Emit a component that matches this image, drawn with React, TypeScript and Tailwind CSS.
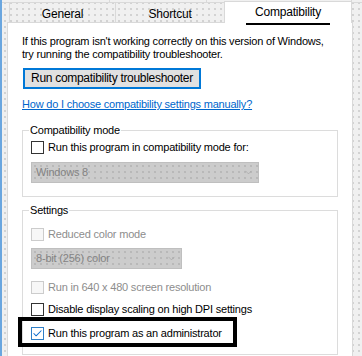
import { Check, ChevronDown } from 'lucide-react';

const dots = 'bg-[#f0f0f0] bg-[radial-gradient(circle,#d2d2d2_0.7px,transparent_0.9px)] bg-size-[6px_6px]';

function Checkbox({ label, checked = false, disabled = false }: { label: string; checked?: boolean; disabled?: boolean }) {
  const box = disabled
    ? 'border-[#cccccc] bg-[#f7f7f7]'
    : checked
      ? 'border-[#2f7fc7] bg-white'
      : 'border-[#333333] bg-white';
  return (
    <div className="flex items-center h-[13px] gap-[4px]">
      <span className={`w-[13px] h-[13px] border flex items-center justify-center shrink-0 ${box}`}>
        {checked && <Check className="w-[11px] h-[11px] text-[#0a6cd0]" strokeWidth={2.2} />}
      </span>
      <span className={`leading-[13px] whitespace-nowrap ${disabled ? 'text-[#8d8d8d]' : 'text-black'}`}>{label}</span>
    </div>
  );
}

function DisabledSelect({ value, width }: { value: string; width: string }) {
  return (
    <div className={`${width} h-[21px] border border-[#bfbfbf] bg-[#cccccc] bg-[radial-gradient(circle,#b8b8b8_0.7px,transparent_0.9px)] bg-size-[6px_6px] flex items-center justify-between pl-[4px] pr-[4px]`}>
      <span className="text-[#838383] leading-[13px]">{value}</span>
      <ChevronDown className="w-[11px] h-[11px] text-[#a3a3a3]" strokeWidth={1.4} />
    </div>
  );
}

export default function App() {
  return (
    <div
      className={`relative w-[362px] h-[356px] overflow-hidden border-l-2 border-[#6aa6df] ${dots} text-[11px] tracking-[-0.2px] text-black`}
      style={{ fontFamily: '"Liberation Sans", Arial, sans-serif' }}
    >
      {/* Upper tab row (cut off) */}
      <div className="flex h-[3px] pl-[7px] border-b border-[#d9d9d9]">
        <div className="w-[101px] border-r border-[#d9d9d9]" />
        <div className="w-[97px] border-r border-[#d9d9d9]" />
        <div className="w-[145px] border-r border-[#d9d9d9]" />
      </div>

      {/* Tabs */}
      <div className="flex h-[19px] pl-[7px] items-end text-[12px]">
        <div className="w-[106px] h-[19px] border-l border-[#d9d9d9] flex items-center justify-center pt-[2px]">General</div>
        <div className="w-[109px] h-[19px] border-l border-[#d9d9d9] flex items-center justify-center pt-[2px]">Shortcut</div>
        <div className="relative z-10 w-[128px] h-[22px] -mb-[1px] bg-white border-l border-r border-t border-[#d9d9d9] flex items-center justify-center pb-[1px]">
          Compatibility
        </div>
      </div>

      {/* Panel */}
      <div className="ml-[5px] w-[346px] h-[340px] bg-white border border-[#d9d9d9] pl-[14px] pt-[12px]">
        <p className="leading-[13px]">
          If this program isn't working correctly on this version of Windows,
          <br />
          try running the compatibility troubleshooter.
        </p>

        <button className="mt-[7px] ml-[1px] w-[178px] h-[21px] border-2 border-[#0078d7] bg-[#e1e1e1] flex items-center justify-center leading-[13px] text-[12px] tracking-[-0.3px]">
          Run compatibility troubleshooter
        </button>

        <a className="block mt-[9px] leading-[13px] text-[#0066cc] underline underline-offset-[1px] w-max">
          How do I choose compatibility settings manually?
        </a>

        <fieldset className="mt-[13px] w-[316px] border border-[#dcdcdc] pl-[8px] pb-[13px]">
          <legend className="-ml-[2px] px-[1px] leading-[13px]">Compatibility mode</legend>
          <div className="mt-[4px]">
            <Checkbox label="Run this program in compatibility mode for:" />
          </div>
          <div className="mt-[8px]">
            <DisabledSelect value="Windows 8" width="w-[228px]" />
          </div>
        </fieldset>

        <fieldset className="mt-[7px] w-[316px] border border-[#dcdcdc] pl-[8px] pb-[14px]">
          <legend className="-ml-[2px] px-[1px] leading-[13px]">Settings</legend>
          <div className="mt-[11px]">
            <Checkbox label="Reduced color mode" disabled />
          </div>
          <div className="mt-[7px]">
            <DisabledSelect value="8-bit (256) color" width="w-[151px]" />
          </div>
          <div className="mt-[12px]">
            <Checkbox label="Run in 640 x 480 screen resolution" disabled />
          </div>
          <div className="mt-[9px]">
            <Checkbox label="Disable display scaling on high DPI settings" />
          </div>
          <div className="mt-[11px]">
            <Checkbox label="Run this program as an administrator" checked />
          </div>
        </fieldset>
      </div>

      {/* Annotation boxes */}
      <div className="absolute left-[244px] top-[1px] w-[84px] h-[24px] border-4 border-black pointer-events-none" />
      <div className="absolute left-[16px] top-[317px] w-[219px] h-[30px] border-4 border-black pointer-events-none" />
    </div>
  );
}
